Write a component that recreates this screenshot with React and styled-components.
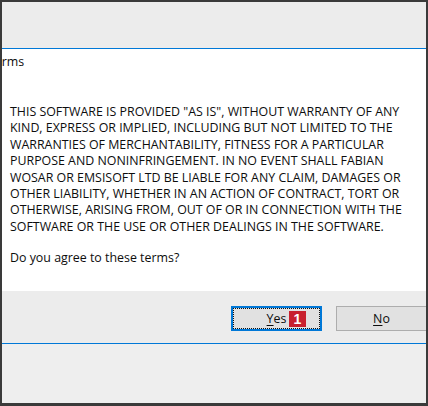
import React from "react";
import styled, { createGlobalStyle } from "styled-components";

const GlobalStyle = createGlobalStyle`
  html, body { margin: 0; padding: 0; background: #ffffff; }
  body { font-family: "Open Sans", "Noto Sans", sans-serif; }
`;

const LICENSE_LINES = [
  'THIS SOFTWARE IS PROVIDED "AS IS", WITHOUT WARRANTY OF ANY',
  "KIND, EXPRESS OR IMPLIED, INCLUDING BUT NOT LIMITED TO THE",
  "WARRANTIES OF MERCHANTABILITY, FITNESS FOR A PARTICULAR",
  "PURPOSE AND NONINFRINGEMENT. IN NO EVENT SHALL FABIAN",
  "WOSAR OR EMSISOFT LTD BE LIABLE FOR ANY CLAIM, DAMAGES OR",
  "OTHER LIABILITY, WHETHER IN AN ACTION OF CONTRACT, TORT OR",
  "OTHERWISE, ARISING FROM, OUT OF OR IN CONNECTION WITH THE",
  "SOFTWARE OR THE USE OR OTHER DEALINGS IN THE SOFTWARE.",
];

const App = () => {
  return (
    <>
      <GlobalStyle />
      <Frame>
        <TitleBar />
        <Content>
          {/* the dialog is cropped on the left, only the end of the title shows */}
          <Heading>Terms</Heading>
          <License>
            {LICENSE_LINES.map((line) => (
              <Line key={line}>{line}</Line>
            ))}
          </License>
          <Question>Do you agree to these terms?</Question>
        </Content>
        <ButtonBar>
          <DialogButton $primary>
            <u>Y</u>es
            <Badge>1</Badge>
          </DialogButton>
          <DialogButton>
            <u>N</u>o
          </DialogButton>
        </ButtonBar>
        <Backdrop />
      </Frame>
    </>
  );
};

const Frame = styled.div`
  width: 428px;
  height: 406px;
  box-sizing: border-box;
  border: 2px solid #3a3a3a;
  border-bottom-width: 3px;
  overflow: hidden;
  display: flex;
  flex-direction: column;
  background: #eeeeee;
`;

const TitleBar = styled.div`
  height: 46px;
  flex-shrink: 0;
  background: #ececec;
  border-bottom: 1px solid #0078d7;
`;

const Content = styled.div`
  height: 242px;
  flex-shrink: 0;
  background: #ffffff;
  color: #0d0d0d;
  font-size: 12.4px;
  padding: 5px 0 0 8px;
  box-sizing: border-box;
`;

const Heading = styled.div`
  margin-left: -22px;
  line-height: 16px;
`;

const License = styled.div`
  margin-top: 34px;
`;

const Line = styled.div`
  white-space: nowrap;
  line-height: 16.4px;
`;

const Question = styled.div`
  margin-top: 15px;
  line-height: 16px;
`;

const ButtonBar = styled.div`
  height: 53px;
  flex-shrink: 0;
  box-sizing: border-box;
  background: #ececec;
  border-bottom: 1px solid #0078d7;
  display: flex;
  gap: 14px;
  padding: 15px 0 0 229px;
`;

const DialogButton = styled.div`
  position: relative;
  flex-shrink: 0;
  width: 91px;
  height: 25px;
  box-sizing: border-box;
  display: flex;
  align-items: center;
  justify-content: center;
  background: #e1e1e1;
  border: ${(p) => (p.$primary ? "2px solid #0078d7" : "1px solid #adadad")};
  outline: ${(p) => (p.$primary ? "1px dotted #111" : "none")};
  outline-offset: -3px;
  font-size: 12.4px;
  color: #0d0d0d;

  u { text-underline-offset: 2px; }
`;

const Badge = styled.span`
  position: absolute;
  left: 56px;
  top: 3px;
  width: 17px;
  height: 16px;
  background: #c8202e;
  color: #ffffff;
  font-family: "Liberation Sans", Arial, sans-serif;
  font-weight: 700;
  font-size: 14px;
  line-height: 16px;
  text-align: center;
`;

const Backdrop = styled.div`
  flex: 1;
  background: #eeeeee;
`;

export default App;
